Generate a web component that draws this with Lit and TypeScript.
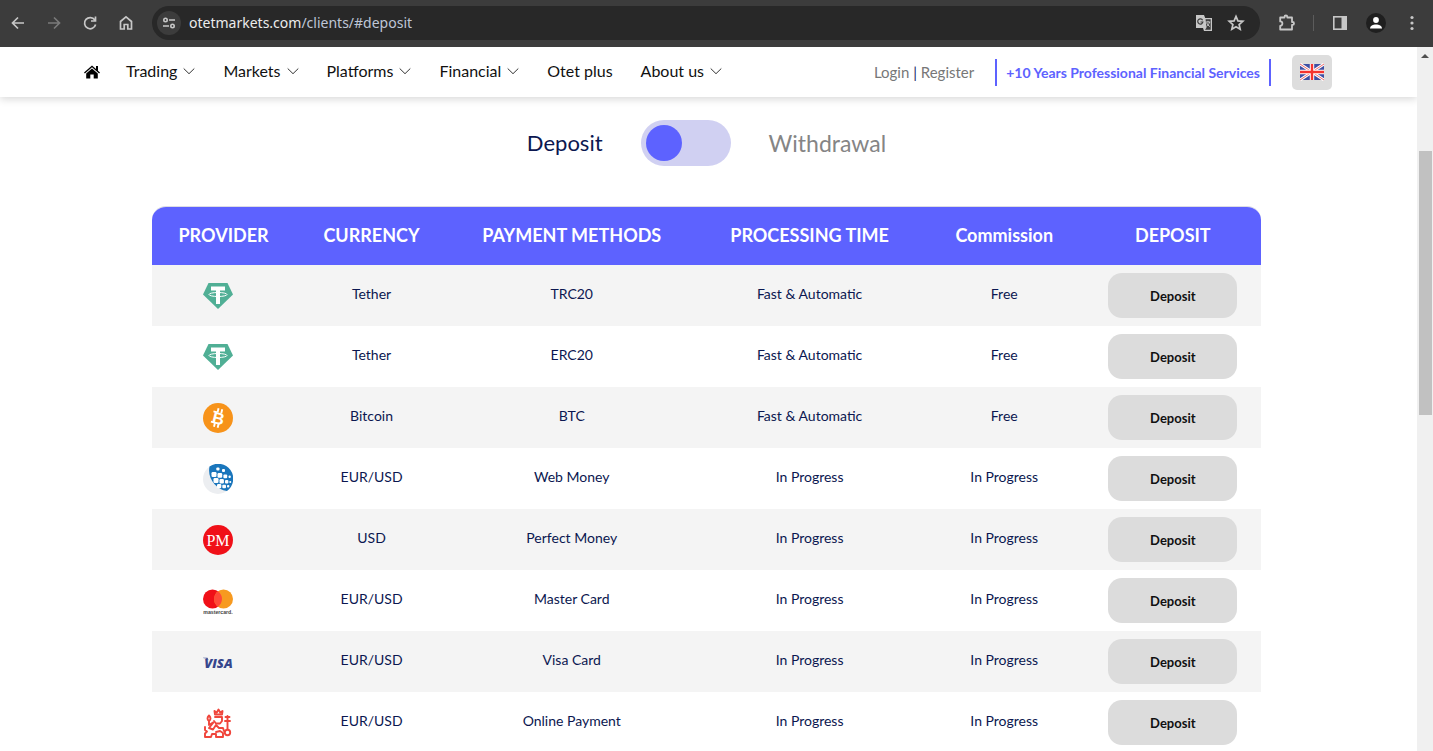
import { LitElement, html, svg, css, nothing } from "lit";
import { customElement, property, state } from "lit/decorators.js";

type Logo = "tether" | "bitcoin" | "webmoney" | "perfect" | "mastercard" | "visa" | "online";

interface Method {
  logo: Logo;
  provider: string;
  currency: string;
  method: string;
  time: string;
  commission: string;
}

const METHODS: Method[] = [
  { logo: "tether", provider: "Tether", currency: "Tether", method: "TRC20", time: "Fast & Automatic", commission: "Free" },
  { logo: "tether", provider: "Tether", currency: "Tether", method: "ERC20", time: "Fast & Automatic", commission: "Free" },
  { logo: "bitcoin", provider: "Bitcoin", currency: "Bitcoin", method: "BTC", time: "Fast & Automatic", commission: "Free" },
  { logo: "webmoney", provider: "WebMoney", currency: "EUR/USD", method: "Web Money", time: "In Progress", commission: "In Progress" },
  { logo: "perfect", provider: "Perfect Money", currency: "USD", method: "Perfect Money", time: "In Progress", commission: "In Progress" },
  { logo: "mastercard", provider: "Mastercard", currency: "EUR/USD", method: "Master Card", time: "In Progress", commission: "In Progress" },
  { logo: "visa", provider: "Visa", currency: "EUR/USD", method: "Visa Card", time: "In Progress", commission: "In Progress" },
  { logo: "online", provider: "Online payment", currency: "EUR/USD", method: "Online Payment", time: "In Progress", commission: "In Progress" },
];

const LOGOS = {
  tether: svg`
    <path d="M5.500 2h19L30 13.500 15 28 0 13.500z" fill="#50af95"/>
    <path d="M8 5.500h14v4h-5V23h-4V9.500H8z" fill="#fff"/>
    <ellipse cx="15" cy="13.500" rx="9" ry="2" fill="none" stroke="#fff" stroke-width="1"/>`,
  bitcoin: svg`
    <circle cx="15" cy="15" r="15" fill="#f7931a"/>
    <g transform="rotate(14 15 15)">
      <path d="M13.200 5.500v4M17 5.500v4M13.200 20.500v4M17 20.500v4M9 9.700h4M9 20.300h4" stroke="#fff" stroke-width="1.900"/>
      <text x="15.500" y="21" text-anchor="middle" font-family="Liberation Sans" font-weight="700" font-size="16.500" fill="#fff">B</text>
    </g>`,
  webmoney: svg`
    <circle cx="15" cy="15" r="15" fill="#eceef1"/>
    <path d="M6.500 2.600A15 15 0 0 1 24 27C13 25.500 4 14 6.500 2.600z" fill="#1a76bc"/>
    <g fill="#fff">
      <rect x="13.300" y="3.500" width="3.200" height="3" rx="1"/>
      <rect x="19" y="5" width="3" height="3" rx="1"/>
      <rect x="8.500" y="8" width="5" height="5" rx="1.200"/>
      <rect x="14.500" y="9" width="4.700" height="4.700" rx="1.200"/>
      <rect x="20.400" y="10.500" width="3.800" height="3.800" rx="1"/>
      <rect x="25.500" y="11.500" width="2.300" height="2.500" rx="1"/>
      <rect x="10.500" y="14" width="5" height="5" rx="1.200"/>
      <rect x="16.500" y="15" width="4.400" height="4.400" rx="1.200"/>
      <rect x="22" y="16" width="3.400" height="3.400" rx="1"/>
      <rect x="26.300" y="17" width="1.900" height="2" rx=".8"/>
      <rect x="14" y="20" width="4.300" height="4.200" rx="1.200"/>
      <rect x="19.300" y="20.700" width="3.700" height="3.600" rx="1"/>
      <rect x="24" y="21" width="2.300" height="2.500" rx=".8"/>
    </g>`,
  perfect: svg`
    <circle cx="15" cy="15" r="15" fill="#f01018"/>
    <text x="15" y="20.500" text-anchor="middle" font-family="Liberation Serif" font-size="16" fill="#fff">PM</text>`,
  mastercard: svg`
    <circle cx="9.500" cy="13" r="9.500" fill="#f01018"/>
    <circle cx="20.500" cy="13" r="9.500" fill="#f79a20"/>
    <path d="M15 5.250a9.500 9.500 0 0 1 0 15.500a9.500 9.500 0 0 1 0-15.500z" fill="#ff4a38"/>
    <text x="15" y="27.500" text-anchor="middle" font-family="Liberation Sans" font-weight="700" font-size="5.200" fill="#444">mastercard.</text>`,
  visa: svg`
    <text x="15.500" y="20.500" text-anchor="middle" font-family="Open Sans" font-style="italic" font-weight="800" font-size="13" fill="#36468c">VISA</text>
    <path d="M0 10.800h4.500l1 2.500C4 11.800 2 11.300 0 11.100z" fill="#36468c"/>`,
  online: svg`
    <g fill="none" stroke="#f0463c" stroke-width="1.900" stroke-linejoin="round" stroke-linecap="round">
      <path d="M12 6.500 11.500 3l2.300 1.500L15.500 1.500l1.700 3L19.500 3 19 6.500z"/>
      <path d="M12 9h7v4l-2 2.500h-4L11 13"/>
      <path d="M6 7.500c-2 2-2 4 0 5.500 2-1.500 2-3.500 0-5.500zM6 13v4l4-2.500"/>
      <path d="M10 15l-4 5 4 1.500 3-4.500 3 3h4l1 3"/>
      <path d="M2 19v3l2 1.500-2 2V29h6l1-3h4v3h7v-4l-3-2-4 1"/>
      <path d="M24.500 8v13M22.500 9h4M22 13h5"/>
      <circle cx="24.500" cy="24.500" r="2.700"/>
    </g>`,
};

@customElement("provider-logo")
export class ProviderLogo extends LitElement {
  @property() name: Logo = "tether";
  @property() label = "";

  static styles = css`
    :host { display: inline-flex; }
    .logo { width: 30px; height: 30px; display: block; }
  `;

  render() {
    return html`<svg class="logo" viewBox="0 0 30 30" role="img" aria-label=${this.label}>${LOGOS[this.name]}</svg>`;
  }
}

@customElement("browser-bar")
export class BrowserBar extends LitElement {
  static styles = css`
    :host { display: block; }
    .bar {
      display: flex; align-items: center; height: 47px; box-sizing: border-box;
      padding: 0 9px 2px 6px; background: #3c3c3c; color: #c7c7c7;
    }
    .btn {
      display: flex; align-items: center; justify-content: center;
      width: 24px; height: 24px; padding: 0; border: 0; background: none; color: inherit;
    }
    .nav { display: flex; gap: 12px; }
    .dim { color: #7a7a7a; }
    .address {
      flex: 1; display: flex; align-items: center; gap: 8px; height: 34px; min-width: 0;
      margin: 0 15px 0 14px; padding: 0 12px 0 5px; box-sizing: border-box;
      border-radius: 17px; background: #282828;
    }
    .site { background: #3c3c3c; border-radius: 50%; }
    .url { flex: 1; min-width: 0; font: 14px/22px "Noto Sans", sans-serif; color: #bfc6d6; }
    .host { color: #ececec; }
    .tools { display: flex; align-items: center; }
    .sep { width: 1px; height: 16px; background: #5c5c5c; margin: 0 14px; }
    .panel { margin-right: 14px; }
    .user { margin-right: 14px; background: #1f1f1f; border-radius: 50%; color: #fff; width: 20px; height: 20px; }
    .pair { display: flex; gap: 8px; }
  `;

  render() {
    const s = { fill: "none", stroke: "currentColor", w: "1.7" };
    return html`
      <div class="bar">
        <div class="nav">
          <button class="btn" aria-label="Back"><svg width="16" height="16" viewBox="0 0 16 16" fill=${s.fill} stroke=${s.stroke} stroke-width=${s.w}><path d="M14 8H3M8 2.500 2.500 8 8 13.500"/></svg></button>
          <button class="btn dim" aria-label="Forward"><svg width="16" height="16" viewBox="0 0 16 16" fill=${s.fill} stroke=${s.stroke} stroke-width=${s.w}><path d="M2 8h11M8 2.500 13.500 8 8 13.500"/></svg></button>
          <button class="btn" aria-label="Reload"><svg width="16" height="16" viewBox="0 0 16 16" fill=${s.fill} stroke=${s.stroke} stroke-width=${s.w}><path d="M12.800 5A5.600 5.600 0 1 0 13.600 9.500M13.500 1.500V6H9"/></svg></button>
          <button class="btn" aria-label="Home"><svg width="16" height="16" viewBox="0 0 16 16" fill=${s.fill} stroke=${s.stroke} stroke-width=${s.w}><path d="M2.500 14V6.500L8 1.800l5.500 4.700V14h-3.700V9.500H6.200V14z"/></svg></button>
        </div>
        <div class="address">
          <button class="btn site" aria-label="Site information"><svg width="14" height="14" viewBox="0 0 14 14" fill=${s.fill} stroke=${s.stroke} stroke-width="1.600"><circle cx="3.500" cy="4" r="1.700"/><path d="M7 4h6M1 10h6"/><circle cx="10.500" cy="10" r="1.700"/></svg></button>
          <span class="url"><span class="host">otetmarkets.com</span>/clients/#deposit</span>
          <div class="pair">
            <button class="btn" aria-label="Translate"><svg width="18" height="18" viewBox="0 0 18 18"><path d="M1 1h8l1.200 3H17v13H9l-1-3H1z" fill="#c7c7c7"/><path d="M10.600 5.300H15.700V15.700H10l1.500-1.900z" fill="#3a3a3a"/><path d="M7.600 6.200A2.600 2.600 0 1 0 7.900 8H5.500" fill="none" stroke="#3a3a3a" stroke-width="1.200"/><path d="M10.800 8h4.500M13 6.800V8M14.600 8c-.5 2-1.800 3.500-3 4.300M11.600 8.800c.6 1.500 1.900 3 3.200 3.800" fill="none" stroke="#c7c7c7"/></svg></button>
            <button class="btn" aria-label="Bookmark"><svg width="18" height="18" viewBox="0 0 18 18" fill=${s.fill} stroke=${s.stroke} stroke-width="1.700"><path d="m9 2.400 1.900 4.500 4.900.4-3.700 3.200 1.100 4.800L9 12.800l-4.200 2.500 1.100-4.800-3.700-3.200 4.900-.4z"/></svg></button>
          </div>
        </div>
        <div class="tools">
          <button class="btn" aria-label="Extensions"><svg width="18" height="18" viewBox="0 0 18 18" fill=${s.fill} stroke=${s.stroke} stroke-width="1.800" stroke-linejoin="round"><path d="M2.200 3.500h4.300v-.6a1.400 1.400 0 0 1 2.800 0v.6H14V8h.6a1.400 1.400 0 0 1 0 2.800H14V15.500H2.200v-3.700a2.200 2.200 0 0 0 0-4.400z"/></svg></button>
          <span class="sep"></span>
          <button class="btn panel" aria-label="Side panel"><svg width="16" height="16" viewBox="0 0 16 16"><rect x="1.800" y="1.800" width="12.400" height="12.400" fill="none" stroke="currentColor" stroke-width="1.600"/><path d="M9.500 2h5v12h-5z" fill="currentColor"/></svg></button>
          <button class="btn user" aria-label="Profile"><svg width="14" height="14" viewBox="0 0 14 14" fill="currentColor"><circle cx="7" cy="4" r="2.900"/><path d="M1 12.500c0-5.500 12-5.500 12 0z"/></svg></button>
          <button class="btn" aria-label="Menu"><svg width="4" height="16" viewBox="0 0 4 16" fill="currentColor"><circle cx="2" cy="2.500" r="1.600"/><circle cx="2" cy="8" r="1.600"/><circle cx="2" cy="13.500" r="1.600"/></svg></button>
        </div>
      </div>`;
  }
}

@customElement("site-header")
export class SiteHeader extends LitElement {
  static styles = css`
    :host { display: block; position: relative; z-index: 1; }
    .head {
      display: flex; align-items: center; height: 50px; padding: 0 85px 0 84px;
      background: #fff; box-shadow: 0 2px 8px rgba(0, 0, 0, 0.16);
      font: 16px/24px Lato, sans-serif; color: #111;
    }
    a { color: inherit; text-decoration: none; }
    .menu { display: flex; align-items: center; gap: 28px; margin: 0; padding: 0 0 2px; list-style: none; }
    .link { display: flex; align-items: center; gap: 6px; white-space: nowrap; }
    .home { margin-right: 26px; display: flex; }
    .right { display: flex; align-items: center; margin-left: auto; white-space: nowrap; }
    .auth { font-size: 15px; color: #777; }
    .bar { color: #1b2a6b; }
    .tag {
      margin: 0 21px; padding: 0 9px; border: solid #5d62ff; border-width: 0 2px;
      font-size: 14px; line-height: 27px; font-weight: 700; color: #5d62ff;
    }
    .lang {
      display: flex; align-items: center; justify-content: center; width: 40px; height: 35px;
      padding: 0; border: 0; border-radius: 5px; background: #ddd;
    }
  `;

  private items = [
    { label: "Trading", sub: true }, { label: "Markets", sub: true }, { label: "Platforms", sub: true },
    { label: "Financial", sub: true }, { label: "Otet plus", sub: false }, { label: "About us", sub: true },
  ];

  render() {
    return html`
      <header class="head">
        <a class="home" href="#home" aria-label="Home"><svg width="16" height="14" viewBox="0 0 16 14"><path d="M8 .4 12 3.900V1h2v4.700L16 7.400l-.9 1L8 2.300.9 8.400l-.9-1z"/><path d="M8 3.500 13.800 8.400V13.500H9.700V9.500H6.300v4H2.200V8.400z"/></svg></a>
        <ul class="menu">
          ${this.items.map((i) => html`<li><a class="link" href="#menu">${i.label}${i.sub
            ? html`<svg width="12" height="12" viewBox="0 0 12 12" fill="none" stroke="#333"><path d="M.7 3.500 6 8.700l5.300-5.200"/></svg>` : nothing}</a></li>`)}
        </ul>
        <div class="right">
          <div class="auth"><a href="#login">Login</a> <span class="bar">|</span> <a href="#register">Register</a></div>
          <span class="tag">+10 Years Professional Financial Services</span>
          <button class="lang" aria-label="Language: English">
            <svg width="24" height="18" viewBox="0 0 24 18">
              <path d="M0 1h24v16H0z" fill="#3f4fa3"/>
              <path d="m0 1 24 16M24 1 0 17" stroke="#fff" stroke-width="3"/>
              <path d="m0 1 24 16M24 1 0 17" stroke="#f06a6a" stroke-width="1"/>
              <path d="M12 1v16M0 9h24" stroke="#fff" stroke-width="4.400"/>
              <path d="M12 1v16M0 9h24" stroke="#f5342f" stroke-width="2.400"/>
            </svg>
          </button>
        </div>
      </header>`;
  }
}

@customElement("app-root")
export class AppRoot extends LitElement {
  @state() private withdrawal = false;

  static styles = css`
    :host { display: flex; flex-direction: column; height: 100vh; overflow: hidden; background: #fff; }
    .view { flex: 1; display: flex; min-height: 0; }
    .page { flex: 1; min-width: 0; overflow: hidden; }
    .content { padding: 23px 156px 0 152px; font-family: Lato, sans-serif; color: #0b1750; }
    .switch {
      display: flex; align-items: center; justify-content: center; gap: 38px;
      margin-bottom: 40px; font-size: 22px; line-height: 28px;
    }
    .off { color: #858585; font-size: 23px; }
    .toggle {
      appearance: none; width: 90px; height: 46px; margin: 0; padding: 5px; box-sizing: border-box;
      display: flex; border-radius: 23px; background: #d0d0f2; cursor: pointer;
    }
    .toggle::before { content: ""; width: 36px; height: 36px; border-radius: 50%; background: #5d62ff; }
    .toggle:checked { justify-content: flex-end; }
    .card { border-top: 1px solid #dcdce4; border-radius: 14px 14px 0 0; overflow: hidden; }
    .table { width: 100%; table-layout: fixed; border-collapse: collapse; text-align: center; }
    .c1 { width: 12.9%; }
    .c2 { width: 13.8%; }
    .c3 { width: 22.3%; }
    .c4 { width: 20.6%; }
    .c5 { width: 14.5%; }
    .c6 { width: 15.9%; }
    th {
      height: 56px; padding: 0 0 2px; background: #5d62ff; color: #fff;
      font-size: 18px; line-height: 24px; font-weight: 700; white-space: nowrap;
    }
    td { height: 58px; padding: 0 0 3px; font-size: 14px; line-height: 20px; }
    td:first-child { height: 61px; padding: 0 11px 0 0; }
    td:last-child { height: 61px; padding: 0; }
    tbody tr:nth-child(odd) { background: #f4f4f4; }
    .cell { display: flex; justify-content: center; }
    .deposit {
      width: 129px; height: 45px; padding: 0; border: 0; border-radius: 14px; background: #dcdcdc;
      color: #111; font: 700 13px/20px Lato, sans-serif;
    }
    .scroll { width: 16px; display: flex; flex-direction: column; align-items: center; background: #f0f0f0; }
    .up { height: 17px; display: flex; align-items: center; }
    .before { flex: 87; }
    .thumb { flex: 264; width: 13px; background: #c1c1c1; }
    .after { flex: 336; }
  `;

  private flip(e: Event) {
    this.withdrawal = (e.target as HTMLInputElement).checked;
  }

  render() {
    const action = this.withdrawal ? "Withdrawal" : "Deposit";
    return html`
      <browser-bar></browser-bar>
      <div class="view">
        <div class="page">
          <site-header></site-header>
          <main class="content">
            <div class="switch">
              <label class=${this.withdrawal ? "off" : "on"} for="mode">Deposit</label>
              <input class="toggle" id="mode" type="checkbox" role="switch" .checked=${this.withdrawal} @change=${this.flip}>
              <label class=${this.withdrawal ? "on" : "off"} for="mode">Withdrawal</label>
            </div>
            <div class="card">
              <table class="table">
                <colgroup><col class="c1"><col class="c2"><col class="c3"><col class="c4"><col class="c5"><col class="c6"></colgroup>
                <thead>
                  <tr><th>PROVIDER</th><th>CURRENCY</th><th>PAYMENT METHODS</th><th>PROCESSING TIME</th><th>Commission</th><th>${action.toUpperCase()}</th></tr>
                </thead>
                <tbody>
                  ${METHODS.map((m) => html`<tr>
                    <td><div class="cell"><provider-logo name=${m.logo} label=${m.provider}></provider-logo></div></td>
                    <td>${m.currency}</td>
                    <td>${m.method}</td>
                    <td>${m.time}</td>
                    <td>${m.commission}</td>
                    <td><button class="deposit">${action}</button></td>
                  </tr>`)}
                </tbody>
              </table>
            </div>
          </main>
        </div>
        <div class="scroll" aria-hidden="true">
          <div class="up"><svg width="8" height="4" viewBox="0 0 8 4"><path d="M4 0 8 4H0z" fill="#505050"/></svg></div>
          <div class="before"></div>
          <div class="thumb"></div>
          <div class="after"></div>
        </div>
      </div>`;
  }
}
